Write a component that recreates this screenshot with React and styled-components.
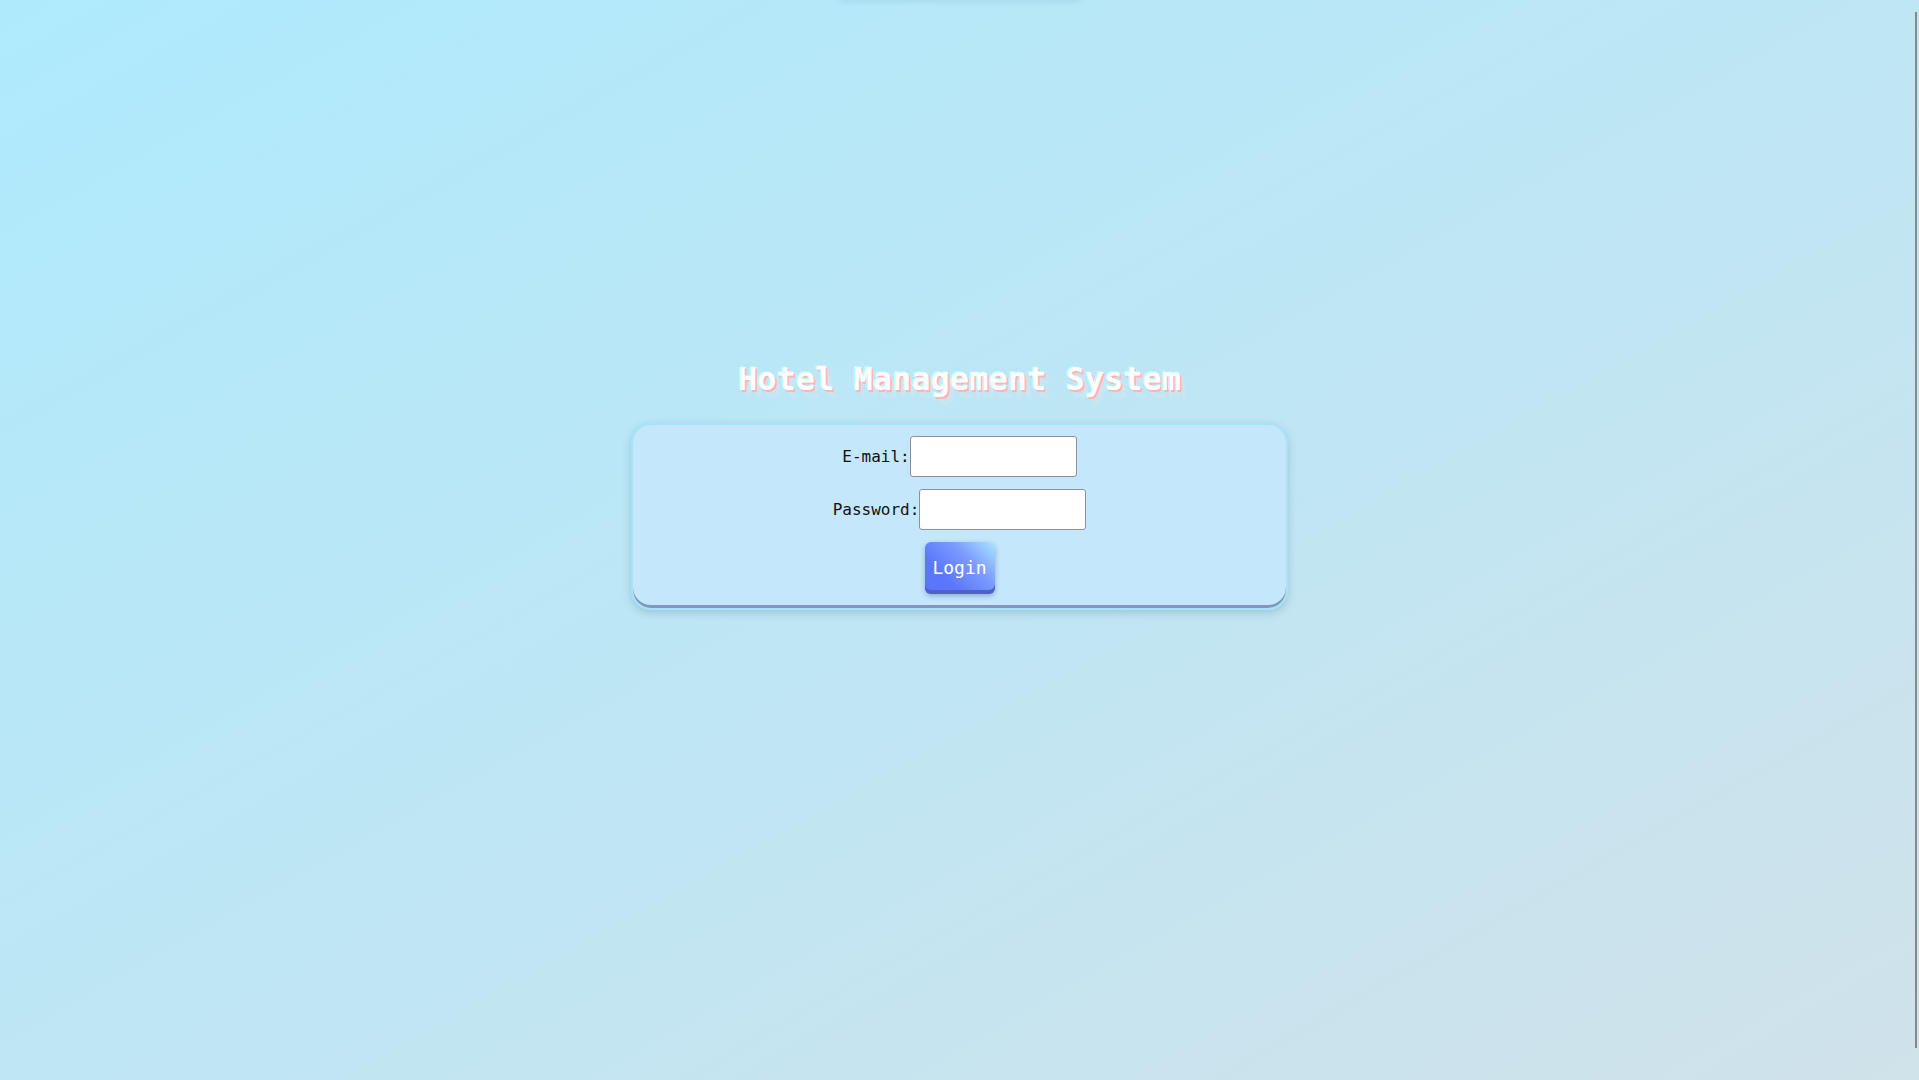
import React from 'react';
import styled, { createGlobalStyle } from 'styled-components';

const GlobalStyle = createGlobalStyle`
    html, body {
        margin: 0;
        padding: 0;
        height: 100%;
        overflow: hidden;
    }

    body {
        font-family: "DejaVu Sans Mono", "Liberation Mono", monospace;
        background: linear-gradient(to bottom right, #aeeafd 0%, #bee6f4 50%, #d0e2ea 100%);
        min-height: 100vh;
    }
`;

const App = () => (
    <>
        <GlobalStyle />
        <Page>
            <TopBar />
            <Title>Hotel Management System</Title>
            <LoginCard>
                <Field>
                    <Label htmlFor="email">E-mail:</Label>
                    <Input id="email" type="email" />
                </Field>
                <Field>
                    <Label htmlFor="password">Password:</Label>
                    <Input id="password" type="password" />
                </Field>
                <LoginButton type="button">Login</LoginButton>
            </LoginCard>
        </Page>
        <ScrollThumb />
    </>
);

const Page = styled.div`
    display: flex;
    flex-direction: column;
    align-items: center;
    min-height: 100vh;
    box-sizing: border-box;
`;

const TopBar = styled.div`
    width: 240px;
    height: 12px;
    margin-top: -12px;
    margin-bottom: 361px;
    box-shadow: 0 1px 6px rgba(40, 90, 120, 0.12);
`;

const Title = styled.h1`
    margin: 0 0 25px 0;
    font-size: 32px;
    line-height: 37px;
    font-weight: bold;
    color: #ffffff;
    text-shadow:
        -1px -1px 0 #aefcff,
        2px 2px 0 #ffb4b6,
        6px 8px 2px rgba(210, 230, 240, 0.6);
`;

const LoginCard = styled.form`
    width: 657px;
    box-sizing: border-box;
    display: flex;
    flex-direction: column;
    align-items: center;
    gap: 12px;
    padding: 11px 0 14px 0;
    background: #c4e7fb;
    border: 2px solid #a5e3fa;
    border-radius: 20px;
    box-shadow:
        inset 0 -3px 0 #8396c0,
        0 3px 8px rgba(60, 100, 130, 0.25);
`;

const Field = styled.div`
    display: flex;
    align-items: center;
`;

const Label = styled.label`
    font-size: 16px;
    color: #111111;
`;

const Input = styled.input`
    width: 167px;
    height: 41px;
    box-sizing: border-box;
    border: 1px solid #8f8f9d;
    border-radius: 3px;
    background: #ffffff;
    padding: 0 8px;
    font-size: 16px;
    font-family: inherit;
`;

const LoginButton = styled.button`
    width: 70px;
    height: 52px;
    border: none;
    border-radius: 6px;
    font-family: "DejaVu Sans Mono", monospace;
    font-size: 18px;
    color: #ffffff;
    padding-bottom: 3px;
    background: linear-gradient(225deg, #a8e6ff 0%, #7d9cfd 35%, #5b77fb 70%, #5a74fa 100%);
    box-shadow:
        inset 0 -4px 0 #4f60c8,
        0 2px 5px rgba(40, 60, 120, 0.35);
    cursor: pointer;

    :hover {
        opacity: 0.9;
    }
`;

const ScrollThumb = styled.div`
    position: fixed;
    top: 12px;
    right: 2px;
    width: 2px;
    height: 1036px;
    background: #888888;
`;

export default App;
